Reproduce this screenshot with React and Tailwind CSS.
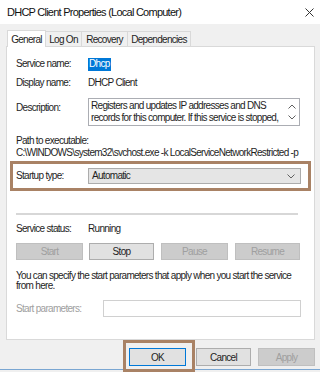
import React from "react";

const font = { fontFamily: '"Liberation Sans", Arial, sans-serif' };

const Chevron = ({ up = false, className = "" }) => (
  <svg width="8" height="5" viewBox="0 0 8 5" className={className}>
    <path
      d={up ? "M0.5 4.5 L4 1 L7.5 4.5" : "M0.5 0.5 L4 4 L7.5 0.5"}
      fill="none"
      stroke="#606060"
      strokeWidth="1"
    />
  </svg>
);

const tabs = [
  { name: "General", w: "w-[39px]", active: true },
  { name: "Log On", w: "w-[36px]" },
  { name: "Recovery", w: "w-[46px]" },
  { name: "Dependencies", w: "w-[63px]" },
];

export default function App() {
  return (
    <div
      className="relative w-[320px] h-[372px] bg-[#f0f0f0] overflow-hidden flex flex-col text-[#1e1e1e] text-[10px] tracking-[-0.7px]"
      style={font}
    >
      {/* title bar */}
      <div className="h-[24px] bg-white flex items-center justify-between pl-[7px] pr-[6px]">
        <span className="text-[11px] tracking-[-0.75px] leading-none text-[#111]">
          DHCP Client Properties (Local Computer)
        </span>
        <svg width="9" height="9" viewBox="0 0 9 9">
          <path d="M0.5 0.5 L8.5 8.5 M8.5 0.5 L0.5 8.5" stroke="#333" strokeWidth="1" />
        </svg>
      </div>

      {/* tabs */}
      <div className="h-[22px] pl-[7px] flex items-end">
        {tabs.map((t) =>
          t.active ? (
            <div
              key={t.name}
              className={`${t.w} h-[17px] -mb-px z-10 bg-white border border-b-0 border-[#d9d9d9] flex items-center justify-center`}
            >
              {t.name}
            </div>
          ) : (
            <div
              key={t.name}
              className={`${t.w} h-[15px] border border-b-0 border-l-0 border-[#d9d9d9] flex items-center justify-center`}
            >
              {t.name}
            </div>
          )
        )}
      </div>

      {/* panel */}
      <div className="ml-[6px] w-[309px] h-[294px] bg-white border border-[#d9d9d9] flex flex-col leading-[12px]">
        <div className="mt-[10px] ml-[9px] h-[14px] flex items-center">
          <span className="w-[72px]">Service name:</span>
          <span className="bg-[#0078d7] text-white px-[1px] h-[13px] flex items-center">Dhcp</span>
        </div>
        <div className="mt-[5px] ml-[9px] h-[14px] flex items-center">
          <span className="w-[72px]">Display name:</span>
          <span>DHCP Client</span>
        </div>
        <div className="mt-[8px] ml-[9px] flex items-start">
          <span className="w-[72px] pt-[4px]">Description:</span>
          <div className="w-[212px] h-[28px] border border-[#abadb3] flex">
            <div className="flex-1 pl-[2px] pt-[1px] leading-[12px] overflow-hidden">
              Registers and updates IP addresses and DNS records for this computer. If this service is stopped,
            </div>
            <div className="w-[14px] flex flex-col items-center justify-center gap-[6px]">
              <Chevron up />
              <Chevron />
            </div>
          </div>
        </div>
        <div className="mt-[9px] ml-[9px]">Path to executable:</div>
        <div className="ml-[9px] w-[287px] overflow-hidden whitespace-nowrap">
          C:\WINDOWS\system32\svchost.exe -k LocalServiceNetworkRestricted -p
        </div>

        {/* startup type highlight */}
        <div className="mt-[2px] ml-[3px] w-[301px] h-[30px] border-[3px] border-[#a98265] flex items-center pl-[3px]">
          <span className="w-[72px]">Startup type:</span>
          <div className="w-[213px] h-[16px] bg-[#e5e5e5] border border-[#acacac] flex items-center justify-between pl-[3px] pr-[5px]">
            <span>Automatic</span>
            <Chevron />
          </div>
        </div>

        <div className="mt-[22px] ml-[9px] w-[282px] h-[2px] bg-[#d7d7d7]" />

        <div className="mt-[8px] ml-[9px] flex items-center">
          <span className="w-[72px]">Service status:</span>
          <span>Running</span>
        </div>

        <div className="mt-[8px] ml-[9px] flex">
          <div className="w-[67px] h-[17px] bg-[#cccccc] border border-[#bfbfbf] text-[#9f9f9f] flex items-center justify-center">
            Start
          </div>
          <div className="ml-[6px] w-[65px] h-[17px] bg-[#e1e1e1] border border-[#adadad] flex items-center justify-center">
            Stop
          </div>
          <div className="ml-[7px] w-[67px] h-[17px] bg-[#cccccc] border border-[#bfbfbf] text-[#9f9f9f] flex items-center justify-center">
            Pause
          </div>
          <div className="ml-[7px] w-[65px] h-[17px] bg-[#cccccc] border border-[#bfbfbf] text-[#9f9f9f] flex items-center justify-center">
            Resume
          </div>
        </div>

        <div className="mt-[11px] ml-[9px] w-[285px] leading-[10px]">
          You can specify the start parameters that apply when you start the service from here.
        </div>

        <div className="mt-[9px] ml-[9px] flex items-center">
          <span className="w-[87px] text-[#a0a0a0]">Start parameters:</span>
          <div className="w-[198px] h-[17px] border border-[#d0d0d0]" />
        </div>
      </div>

      {/* dialog buttons */}
      <div className="flex items-start">
        <div className="ml-[123px] w-[72px] h-[32px] border-[3px] border-[#a98265] z-10 pl-[3px] pt-[5px]">
          <div className="w-[57px] h-[18px] bg-[#e1e1e1] border border-[#0078d7] flex items-center justify-center">
            OK
          </div>
        </div>
        <div className="ml-[1px] mt-[8px] w-[55px] h-[18px] bg-[#e1e1e1] border border-[#adadad] flex items-center justify-center">
          Cancel
        </div>
        <div className="ml-[7px] mt-[8px] w-[57px] h-[18px] bg-[#cccccc] border border-[#bfbfbf] text-[#9f9f9f] flex items-center justify-center">
          Apply
        </div>
      </div>

      <div className="absolute left-0 right-0 bottom-[2px] h-px bg-[#7aa6d2]" />
    </div>
  );
}
